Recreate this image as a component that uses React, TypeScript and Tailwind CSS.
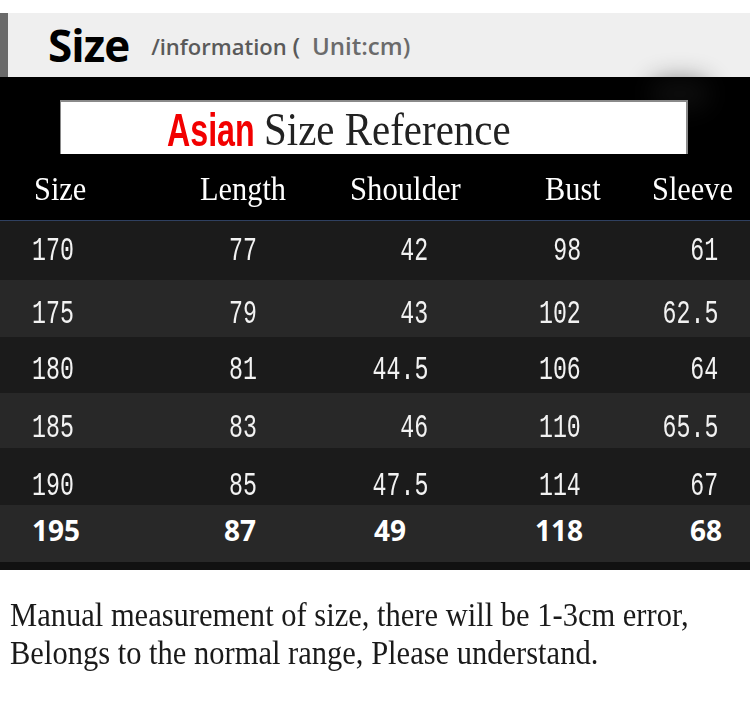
const rows = [
  { v: ["170", "77", "42", "98", "61"], cls: "h-[59px] bg-[#1b1b1b]", pad: "pt-0" },
  { v: ["175", "79", "43", "102", "62.5"], cls: "h-[57px] bg-[#282828]", pad: "pt-[9px]" },
  { v: ["180", "81", "44.5", "106", "64"], cls: "h-[56px] bg-[#1b1b1b]", pad: "pt-[8px]" },
  { v: ["185", "83", "46", "110", "65.5"], cls: "h-[55px] bg-[#282828]", pad: "pt-[13px]" },
  { v: ["190", "85", "47.5", "114", "67"], cls: "h-[57px] bg-[#1b1b1b]", pad: "pt-[17px]" },
];

const last = ["195", "87", "49", "118", "68"];

const grid = "grid grid-cols-[200px_140px_88px_153px_137px] items-center";
const mono = "inline-block font-['Liberation_Mono'] text-[31px] leading-none text-[#f2f2f2] scale-x-[0.75] scale-y-[1.08]";
const cellCls = [
  "justify-self-start pl-[32px]",
  "justify-self-start pl-[29px]",
  "justify-self-end",
  "justify-self-end",
  "justify-self-end",
];
const boldCls = [
  "justify-self-start pl-[32px]",
  "justify-self-start pl-[24px]",
  "justify-self-end pr-[22px]",
  "justify-self-end -mr-[2px]",
  "justify-self-end -mr-[4px]",
];

const SizeRow = ({ values, cls, pad }: { values: string[]; cls: string; pad: string }) => (
  <div className={`${grid} ${cls} ${pad}`}>
    {values.map((val, i) => (
      <div key={i} className={cellCls[i]}>
        <span className={`${mono} ${i < 2 ? "origin-left" : "origin-right"}`}>{val}</span>
      </div>
    ))}
  </div>
);

export default function App() {
  return (
    <div className="w-[750px] h-[707px] bg-white overflow-hidden">
      {/* top heading bar */}
      <div className="pt-[13px]">
        <div className="flex items-center h-[64px] bg-[#efefef]">
          <div className="w-[8px] h-full bg-[#6a6a6a]" />
          <span className="ml-[40px] font-['Open_Sans'] font-bold text-[44px] leading-none text-black tracking-[-1px]">
            Size
          </span>
          <span className="ml-[22px] mt-[2px] font-['Open_Sans'] font-semibold text-[22px] leading-none text-[#5a5a5a] whitespace-pre">
            /information <span className="text-[24px]">(</span>
            <span className="ml-[12px] text-[24px] text-[#6b6b6b]">Unit:cm)</span>
          </span>
        </div>
      </div>

      {/* black title area */}
      <div className="relative bg-black pt-[23px]">
        <div className="absolute right-[40px] top-[2px] w-[60px] h-[30px] rounded-full bg-[#1c1c1c] blur-[12px] opacity-50" />
        <div className="relative ml-[60px] w-[628px] h-[54px] bg-white border-t-2 border-r-2 border-l border-[#8a8a8a] flex items-end pb-[1px] pl-[106px]">
          <span className="inline-block w-[90px] whitespace-nowrap origin-left scale-x-[0.7] font-['Liberation_Sans'] font-bold text-[46px] leading-none text-[#f20000]">
            Asian
          </span>
          <span className="inline-block w-[248px] whitespace-nowrap origin-left scale-x-[0.89] ml-[7px] font-['Liberation_Serif'] text-[46px] leading-none text-[#222]">
            Size Reference
          </span>
        </div>
        <div className="grid grid-cols-[200px_150px_195px_107px_98px] h-[66px] pt-[19px] font-['Liberation_Serif'] text-[33px] leading-none text-white">
          <span className="pl-[34px]">
            <span className="inline-block origin-left scale-x-[0.92]">Size</span>
          </span>
          <span>
            <span className="inline-block origin-left scale-x-[0.92]">Length</span>
          </span>
          <span>
            <span className="inline-block origin-left scale-x-[0.93]">Shoulder</span>
          </span>
          <span>
            <span className="inline-block origin-left scale-x-[0.92]">Bust</span>
          </span>
          <span>
            <span className="inline-block origin-left scale-x-[0.92]">Sleeve</span>
          </span>
        </div>
      </div>
      <div className="h-px bg-[#2f4060]" />

      {/* data rows */}
      {rows.map((r, i) => (
        <SizeRow key={i} values={r.v} cls={r.cls} pad={r.pad} />
      ))}
      <div className={`${grid} h-[57px] bg-[#282828] pb-[5px]`}>
        {last.map((val, i) => (
          <div key={i} className={boldCls[i]}>
            <span className="font-['Open_Sans'] font-bold text-[28px] leading-none text-white">{val}</span>
          </div>
        ))}
      </div>
      <div className="h-[8px] bg-[#111]" />

      {/* note */}
      <div className="pt-[26px] pl-[10px] font-['Liberation_Serif'] text-[33px] leading-[38px] text-[#1a1a1a]">
        <div className="whitespace-nowrap">
          <span className="inline-block origin-left scale-x-[0.925]">
            Manual measurement of size, there will be 1-3cm error,
          </span>
        </div>
        <div className="whitespace-nowrap">
          <span className="inline-block origin-left scale-x-[0.925]">
            Belongs to the normal range, Please understand.
          </span>
        </div>
      </div>
    </div>
  );
}
